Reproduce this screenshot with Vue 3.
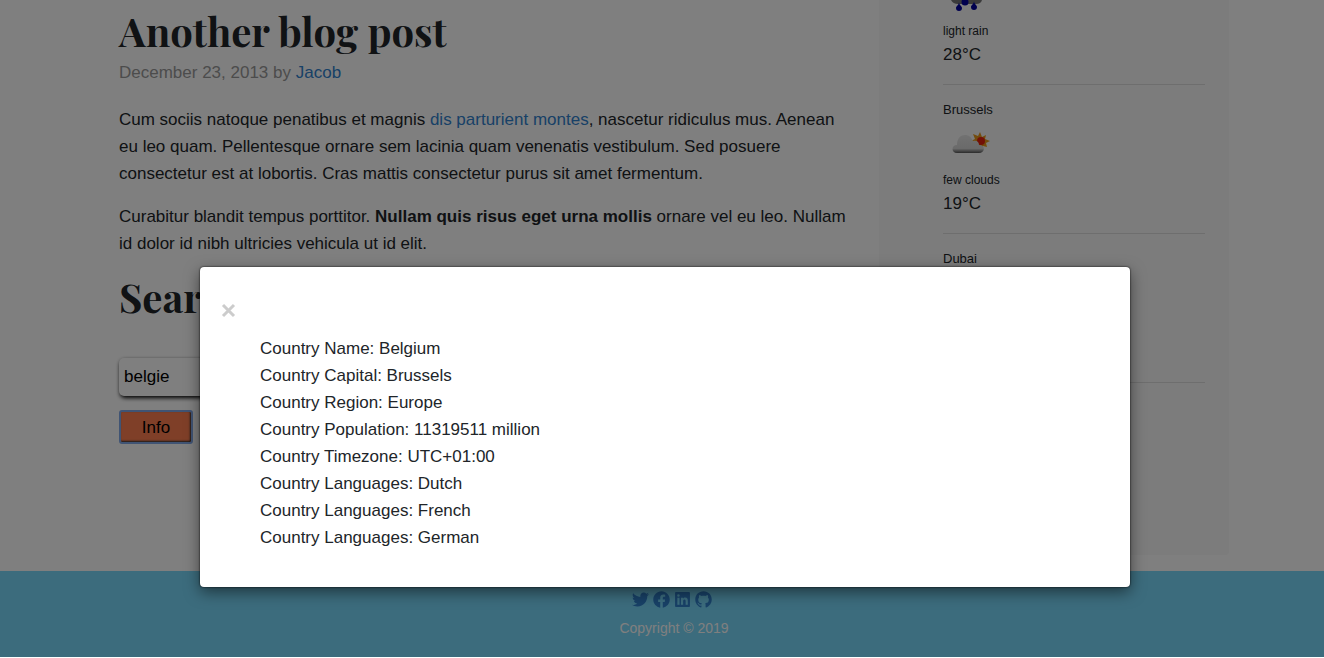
<script setup>
import { ref } from 'vue'

const query = ref('belgie')
const facts = [
  'Country Name: Belgium',
  'Country Capital: Brussels',
  'Country Region: Europe',
  'Country Population: 11319511 million',
  'Country Timezone: UTC+01:00',
  'Country Languages: Dutch',
  'Country Languages: French',
  'Country Languages: German'
]
const social = [
  { name: 'Twitter', path: 'M459.37 151.716c.325 4.548.325 9.097.325 13.645 0 138.72-105.583 298.558-298.558 298.558-59.452 0-114.68-17.219-161.137-47.106 8.447.974 16.568 1.299 25.34 1.299 49.055 0 94.213-16.568 130.274-44.832-46.132-.975-84.792-31.188-98.112-72.772 6.498.974 12.995 1.624 19.818 1.624 9.421 0 18.843-1.3 27.614-3.573-48.081-9.747-84.143-51.98-84.143-102.985v-1.299c13.969 7.797 30.214 12.67 47.431 13.319-28.264-18.843-46.781-51.005-46.781-87.391 0-19.492 5.197-37.36 14.294-52.954 51.655 63.675 129.3 105.258 216.365 109.807-1.624-7.797-2.599-15.918-2.599-24.04 0-57.828 46.782-104.934 104.934-104.934 30.213 0 57.502 12.67 76.67 33.137 23.715-4.548 46.456-13.32 66.599-25.34-7.798 24.366-24.366 44.833-46.132 57.827 21.117-2.273 41.584-8.122 60.426-16.243-14.292 20.791-32.161 39.308-52.628 54.253z' },
  { name: 'Facebook', path: 'M504 256C504 119 393 8 256 8S8 119 8 256c0 123.78 90.69 226.38 209.25 245V327.69h-63V256h63v-54.64c0-62.15 37-96.48 93.67-96.48 27.14 0 55.52 4.84 55.52 4.84v61h-31.28c-30.8 0-40.41 19.12-40.41 38.73V256h68.78l-11 71.69h-57.78V501C413.31 482.38 504 379.78 504 256z' },
  { name: 'LinkedIn', path: 'M448 32H64C46 32 32 46 32 64v384c0 18 14 32 32 32h384c18 0 32-14 32-32V64c0-18-14-32-32-32zM167 416H101V202h66v214zM134 173a38 38 0 1 1 0-77 38 38 0 0 1 0 77zm282 243h-66V312c0-25 0-57-35-57s-40 27-40 55v106h-66V202h64v29c9-17 31-34 63-34 67 0 80 44 80 102v117z' },
  { name: 'GitHub', path: 'M256 8C114 8 8 116 8 256c0 112 70 203 169 238 13 2 17-6 17-12v-44c-70 15-85-30-85-30-11-29-28-37-28-37-23-16 2-15 2-15 25 2 38 26 38 26 22 39 58 28 73 21 2-16 9-27 16-33-56-7-112-14-112-115 0-29 8-43 25-61-3-7-11-34 3-69 21-7 69 27 69 27 40-11 82-11 122 0 0 0 48-34 69-27 14 35 6 62 3 69 17 18 27 33 27 61 0 101-58 108-114 115 9 8 17 23 17 46v66c0 6 4 14 17 12 99-35 168-126 168-238C504 116 398 8 256 8z' }
]
</script>

<template>
  <div class="page">
    <div class="columns">
      <main class="blog">
        <article>
          <h2>Another blog post</h2>
          <p class="meta">December 23, 2013 by <a href="#">Jacob</a></p>
          <p>Cum sociis natoque penatibus et magnis <a href="#">dis parturient montes</a>, nascetur ridiculus mus. Aenean eu leo quam. Pellentesque ornare sem lacinia quam venenatis vestibulum. Sed posuere consectetur est at lobortis. Cras mattis consectetur purus sit amet fermentum.</p>
          <p>Curabitur blandit tempus porttitor. <strong>Nullam quis risus eget urna mollis</strong> ornare vel eu leo. Nullam id dolor id nibh ultricies vehicula ut id elit.</p>
        </article>
        <section class="search">
          <h2><label for="country">Search</label></h2>
          <input id="country" v-model="query" type="text" />
          <button type="button" class="info">Info</button>
        </section>
      </main>
      <aside class="weather">
        <section class="city first">
          <svg class="sky" viewBox="0 0 50 50" aria-hidden="true">
            <path d="M8 29q2 4 7 4h18q5 0 6-4z" fill="#777" />
            <path d="M16 31c0 3-3 4-3 6a3 3 0 0 0 6 0c0-2-3-3-3-6zM31 30c0 3-3 4-3 6a3 3 0 0 0 6 0c0-2-3-3-3-6z" fill="#00009c" />
            <circle cx="22" cy="31" r="3.500" fill="#00009c" />
          </svg>
          <p class="small">light rain</p>
          <p>28°C</p>
        </section>
        <section class="city">
          <p class="name">Brussels</p>
          <svg class="sky" viewBox="0 0 50 50" aria-hidden="true">
            <defs>
              <linearGradient id="cloud" x1="0" y1="0" x2="0" y2="1">
                <stop offset="0" stop-color="#e4e4e4" />
                <stop offset="0.75" stop-color="#d5d5d5" />
                <stop offset="1" stop-color="#555" />
              </linearGradient>
            </defs>
            <path d="m37 12 2 5 4-2-1 4 5 2-4 2 1 4-4-1-2 4-3-4-4 1 1-4-4-2 4-2-2-5 5 2z" fill="#e8981b" />
            <circle cx="38" cy="21" r="4" fill="#e5200c" />
            <path d="M14 33c-6 0-6-8 0-8 0-6 3-10 8-10 4 0 6 2 8 6 4-1 6 1 6 4 7 0 6 8 0 8z" fill="url(#cloud)" />
          </svg>
          <p class="small">few clouds</p>
          <p>19°C</p>
        </section>
        <section class="city">
          <p class="name">Dubai</p>
        </section>
      </aside>
    </div>
    <footer>
      <nav>
        <a v-for="item in social" :key="item.name" href="#" :aria-label="item.name">
          <svg viewBox="0 0 512 512" aria-hidden="true"><path :d="item.path" /></svg>
        </a>
      </nav>
      <p>Copyright © 2019</p>
    </footer>
    <div class="overlay">
      <div class="dialog" role="dialog" aria-modal="true" aria-label="Country information">
        <button type="button" class="close" aria-label="Close">
          <svg viewBox="0 0 18 18" aria-hidden="true"><path d="M3 3l11 11M14 3L3 14" /></svg>
        </button>
        <ul>
          <li v-for="fact in facts" :key="fact">{{ fact }}</li>
        </ul>
      </div>
    </div>
  </div>
</template>

<style>
body {
  margin: 0;
  background: #fff;
}
</style>

<style scoped>
* {
  box-sizing: border-box;
}
.page {
  position: relative;
  overflow: hidden;
  font: 17px/27px "Liberation Sans", Arial, sans-serif;
  color: #212529;
}
p, h2, ul {
  margin: 0;
  padding: 0;
}
a {
  color: #3182ce;
  text-decoration: none;
}
.columns {
  display: flex;
  gap: 30px;
  max-width: 1134px;
  margin: 0 auto;
  padding: 0 0 16px 24px;
}
.blog {
  flex: 1;
}
h2 {
  font: bold 40px/48px "Playfair Display", "Liberation Serif", serif;
}
article {
  padding-top: 7px;
}
article p {
  margin-bottom: 16px;
}
article .meta {
  margin: 4px 0 20px;
  color: #999;
}
.search {
  display: flex;
  flex-direction: column;
  align-items: flex-start;
}
.search input {
  width: 240px;
  height: 38px;
  margin: 37px 0 14px;
  padding: 0 5px;
  border: 0;
  border-radius: 5px;
  background: #fff;
  box-shadow: 1px 2px 4px #000;
  font: inherit;
  color: #000;
}
.info {
  width: 74px;
  height: 34px;
  padding: 0;
  border: 2px solid #80a8e8;
  border-radius: 3px;
  background: #ff7f50;
  box-shadow: inset -1px -1px 2px #333;
  font: inherit;
  color: #000;
}
.weather {
  flex: 0 0 350px;
  padding: 0 24px 172px 64px;
  border-radius: 0 0 4px 4px;
  background: #f8f8f8;
}
.city {
  height: 149px;
  padding-top: 15px;
  border-bottom: 1px solid #ddd;
}
.city.first {
  height: 85px;
  padding: 0;
  overflow: hidden;
}
.name {
  font-size: 13px;
  line-height: 20px;
}
.small {
  font-size: 12px;
  line-height: 20px;
}
.sky {
  display: block;
  width: 50px;
  height: 50px;
}
.first .sky {
  margin-top: -29px;
}
footer {
  padding: 20px 0 15px 24px;
  background: #78d8fa;
  text-align: center;
  color: #fff;
}
nav {
  display: flex;
  justify-content: center;
}
nav a {
  display: flex;
  padding-right: 4px;
}
nav svg {
  width: 17px;
  height: 17px;
  fill: #3182ce;
}
footer p {
  margin-top: 7px;
  font-size: 14px;
}
.overlay {
  position: absolute;
  inset: 0;
  background: rgba(0, 0, 0, 0.5);
}
.dialog {
  position: absolute;
  top: 267px;
  left: 200px;
  right: 194px;
  padding: 35px 20px 36px;
  border-radius: 4px;
  background: #fff;
  box-shadow: 0 5px 15px rgba(0, 0, 0, 0.5), 0 0 2px #000;
}
.close {
  display: flex;
  padding: 0;
  border: 0;
  background: none;
}
.close svg {
  width: 18px;
  height: 18px;
  fill: none;
  stroke: #ccc;
  stroke-width: 3;
}
.dialog ul {
  margin-top: 15px;
  padding-left: 40px;
  list-style: none;
}
</style>
